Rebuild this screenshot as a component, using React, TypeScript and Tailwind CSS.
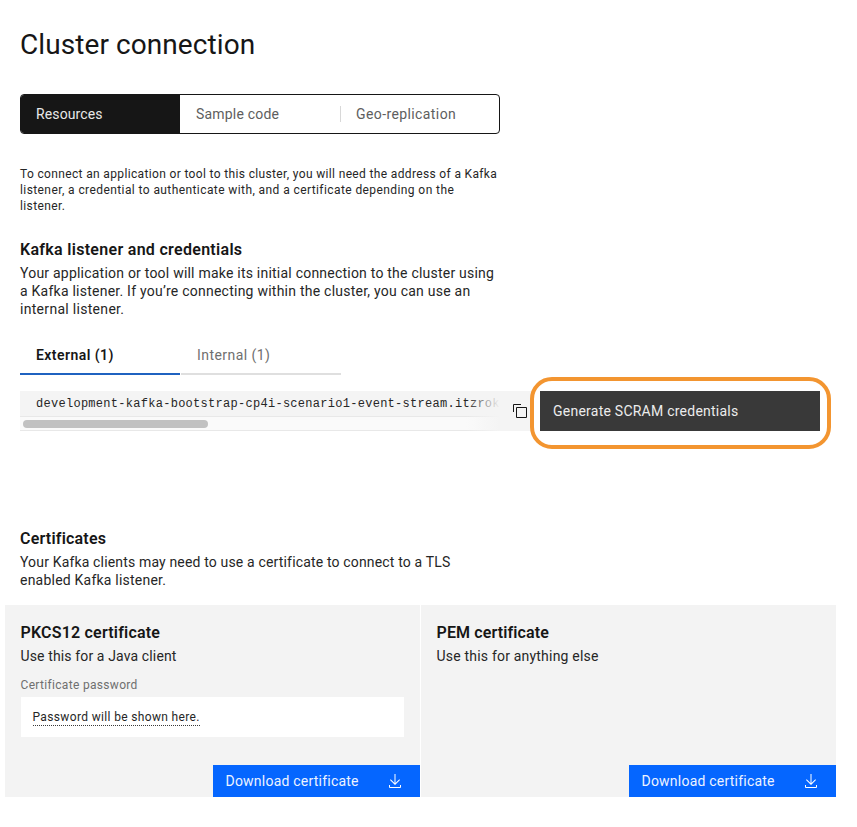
import type { ReactNode } from "react";

function CopyIcon() {
  return (
    <svg width="16" height="16" viewBox="0 0 32 32" fill="#161616" aria-hidden="true">
      <path d="M28,10V28H10V10H28m0-2H10a2,2,0,0,0-2,2V28a2,2,0,0,0,2,2H28a2,2,0,0,0,2-2V10a2,2,0,0,0-2-2Z" />
      <path d="M4,18H2V4A2,2,0,0,1,4,2H18V4H4Z" />
    </svg>
  );
}

function DownloadIcon() {
  return (
    <svg width="16" height="16" viewBox="0 0 32 32" fill="#ffffff" aria-hidden="true">
      <path d="M26 24v4H6v-4H4v4a2 2 0 0 0 2 2h20a2 2 0 0 0 2-2v-4z" />
      <path d="M26 14l-1.41-1.41L17 20.17V2h-2v18.17l-7.59-7.58L6 14l10 10 10-10z" />
    </svg>
  );
}

function DownloadButton() {
  return (
    <button className="mt-auto ml-auto flex h-8 w-[207px] items-center justify-between bg-[#0566ff] pr-[17px] pl-[12.5px] text-sm leading-[18px] tracking-[0.22px] text-[#edf3ff]">
      <span>Download certificate</span>
      <DownloadIcon />
    </button>
  );
}

function CertificatePanel({ title, titleClass, children }: { title: string; titleClass: string; children: ReactNode }) {
  return (
    <section className="flex h-48 w-[415px] flex-col bg-[#f3f3f3]">
      <div className="pt-4 pl-[15.5px]">
        <h3 className={`text-base leading-6 font-semibold ${titleClass}`}>{title}</h3>
        {children}
      </div>
      <DownloadButton />
    </section>
  );
}

export default function App() {
  return (
    <main className="h-[827px] w-[857px] overflow-hidden bg-white pt-[27px] font-[Roboto,sans-serif] whitespace-nowrap text-[#161616]">
      <div className="px-5">
        <h1 className="text-[28px] leading-9 tracking-[0.08px]">Cluster connection</h1>

        <div className="mt-[31px] flex h-10 w-[480px] overflow-hidden rounded border border-[#161616] text-sm leading-[18px]">
          <div className="flex w-[159px] items-center bg-[#161616] pl-[15px] tracking-[0.12px] text-[#e8e8e8]">Resources</div>
          <div className="flex w-40 items-center pl-4 tracking-[0.2px] text-[#5e5e5e]">Sample code</div>
          <div className="flex flex-1 items-center text-[#5e5e5e]">
            <span className="h-4 w-px bg-[#d8d8d8]" />
            <span className="pl-[15px] tracking-[0.4px]">Geo-replication</span>
          </div>
        </div>

        <p className="mt-8 text-xs leading-4 text-[#262626]">
          <span className="block tracking-[0.35px]">To connect an application or tool to this cluster, you will need the address of a Kafka</span>
          <span className="block tracking-[0.41px]">listener, a credential to authenticate with, and a certificate depending on the</span>
          <span className="block tracking-[0.38px]">listener.</span>
        </p>

        <h2 className="mt-6 text-base leading-6 font-semibold tracking-[0.3px]">Kafka listener and credentials</h2>
        <p className="mt-[2px] text-sm leading-[18px] text-[#262626]">
          <span className="block tracking-[0.22px]">Your application or tool will make its initial connection to the cluster using</span>
          <span className="block tracking-[0.24px]">a Kafka listener. If you’re connecting within the cluster, you can use an</span>
          <span className="block tracking-[0.3px]">internal listener.</span>
        </p>

        <div className="mt-[17px] flex gap-px text-sm leading-[18px]">
          <div className="h-10 w-40 border-b-2 border-[#1f62c0] pt-[11px] pl-4 font-semibold tracking-[0.44px]">External (1)</div>
          <div className="h-10 w-40 border-b-2 border-[#dfdfdf] pt-[11px] pl-4 tracking-[0.44px] text-[#6f6f6f]">Internal (1)</div>
        </div>

        <div className="mt-4 flex h-10">
          <div className="relative flex w-[512px] bg-[#f4f4f4]">
            <div className="flex w-[480px] flex-col">
              <code className="block h-[25px] pt-px pl-4 font-['Liberation_Mono',monospace] text-xs leading-6 tracking-[0.28px] text-[#262626]">
                development-kafka-bootstrap-cp4i-scenario1-event-stream.itzrok
              </code>
              <div className="h-[15px] border-y border-[#e8e8e8] bg-[#fafafa] pt-[3px] pl-[3px]">
                <div className="h-2 w-[185px] rounded-full bg-[#c1c1c1]" />
              </div>
            </div>
            <div className="absolute inset-y-0 left-[446px] w-[34px] bg-linear-to-r from-transparent to-[#f4f4f4]" />
            <div className="flex flex-1 items-center pl-3">
              <CopyIcon />
            </div>
          </div>
          <div className="relative ml-2 w-[280px]">
            <button className="flex h-10 w-full items-center bg-[#393939] pl-[13px] text-sm leading-[18px] tracking-[0.24px] text-[#ececec]">
              Generate SCRAM credentials
            </button>
            <div className="pointer-events-none absolute -top-[14px] -left-[10px] h-[72px] w-[301px] rounded-[22px] border-4 border-[#f39530]" />
          </div>
        </div>

        <h2 className="mt-24 text-base leading-6 font-semibold tracking-[0.2px]">Certificates</h2>
        <p className="mt-[2px] text-sm leading-[18px] text-[#262626]">
          <span className="block tracking-[0.16px]">Your Kafka clients may need to use a certificate to connect to a TLS</span>
          <span className="block tracking-[0.22px]">enabled Kafka listener.</span>
        </p>
      </div>

      <div className="mt-4 ml-[5px] flex gap-px">
        <CertificatePanel title="PKCS12 certificate" titleClass="tracking-[0.2px]">
          <p className="mt-[2px] text-sm leading-[18px] tracking-[0.13px] text-[#262626]">Use this for a Java client</p>
          <p className="mt-3 text-xs leading-4 tracking-[0.32px] text-[#6f6f6f]">Certificate password</p>
          <div className="mt-1 ml-[0.5px] flex h-10 w-[383px] items-center bg-white pl-[11.5px] text-xs leading-4 text-[#262626]">
            <span className="border-b border-dotted border-[#393939] tracking-[0.35px]">Password will be shown here.</span>
          </div>
        </CertificatePanel>
        <CertificatePanel title="PEM certificate" titleClass="tracking-[0.12px]">
          <p className="mt-[2px] text-sm leading-[18px] tracking-[0.2px] text-[#262626]">Use this for anything else</p>
        </CertificatePanel>
      </div>
    </main>
  );
}
